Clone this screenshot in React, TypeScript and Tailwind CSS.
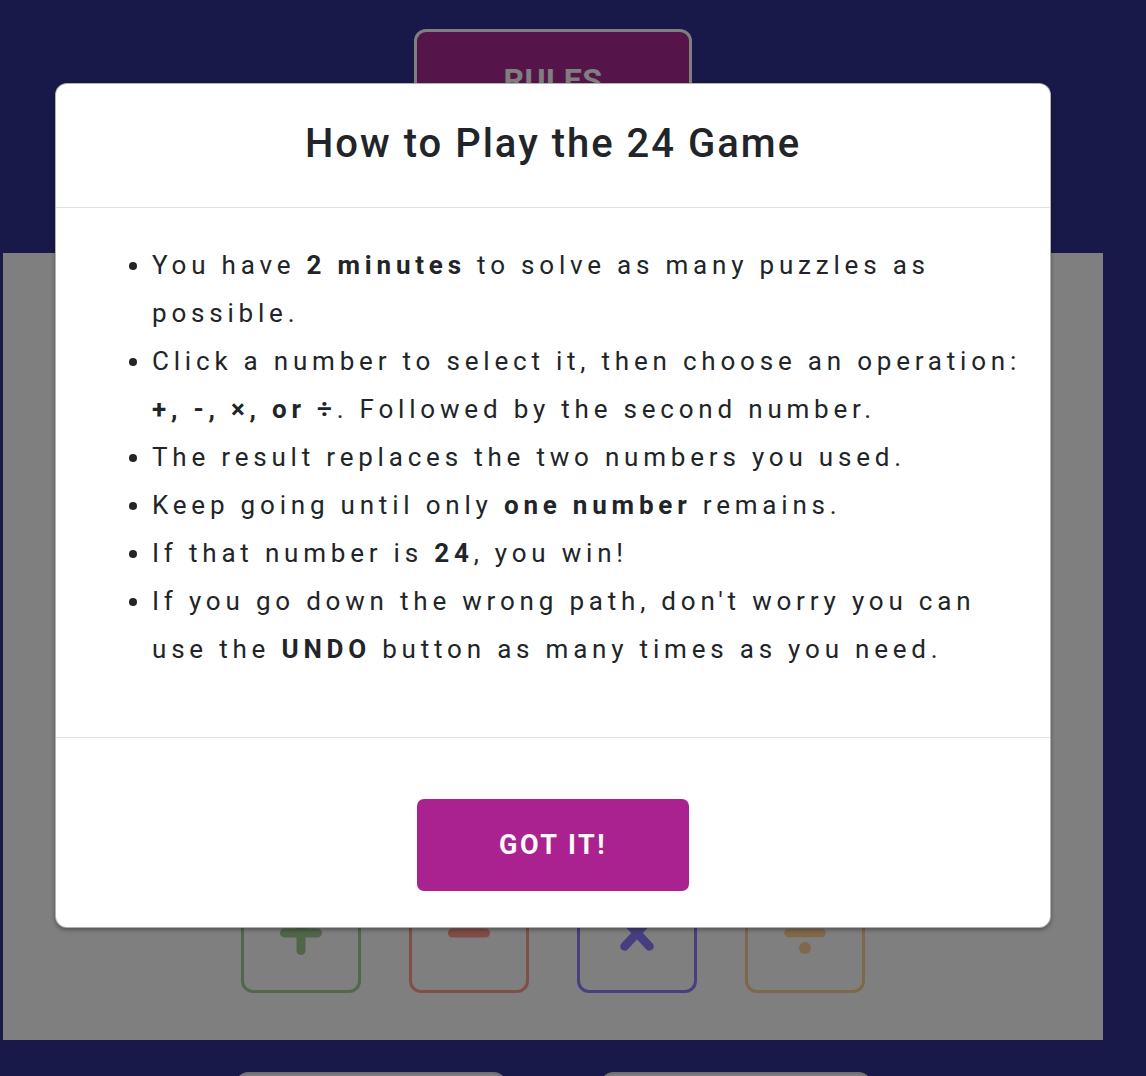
import React from "react";

const font = { fontFamily: "Roboto, 'Noto Sans', sans-serif" };

export default function App() {
  return (
    <div className="relative h-[1076px] w-[1146px] overflow-hidden bg-[#323292]" style={font}>
      {/* Background page */}
      <div className="flex w-[1106px] flex-col">
        <div className="flex justify-center pt-[29px]">
          <button className="flex h-[110px] w-[278px] items-start justify-center rounded-[12px] border-[3px] border-white bg-[#aa2a94] pt-[24px] text-[32px] font-bold leading-[48px] tracking-[0.5px] text-white">
            RULES
          </button>
        </div>
        <div className="ml-[3px] mt-[114px] flex h-[787px] w-[1100px] flex-col items-center justify-end bg-white pb-[47px]">
          <div className="flex gap-[48px]">
            <div className="flex h-[120px] w-[120px] items-center justify-center rounded-[12px] border-[3px] border-[#a2d096]">
              <svg width="44" height="44" viewBox="0 0 44 44"><path d="M22 4.5v35M5.5 22h33" stroke="#a0cc92" strokeWidth="9" strokeLinecap="round" /></svg>
            </div>
            <div className="flex h-[120px] w-[120px] items-center justify-center rounded-[12px] border-[3px] border-[#ffa090]">
              <svg width="44" height="44" viewBox="0 0 44 44"><path d="M5.5 22h33" stroke="#ff9a8a" strokeWidth="9" strokeLinecap="round" /></svg>
            </div>
            <div className="flex h-[120px] w-[120px] items-center justify-center rounded-[12px] border-[3px] border-[#8c80ff]">
              <svg width="44" height="44" viewBox="0 0 44 44"><path d="M9.5 8.5l25 27M34.5 8.5l-25 27" stroke="#8c7eff" strokeWidth="8.5" strokeLinecap="round" /></svg>
            </div>
            <div className="flex h-[120px] w-[120px] items-center justify-center rounded-[12px] border-[3px] border-[#ffd094]">
              <svg width="44" height="44" viewBox="0 0 44 44"><path d="M5.5 22h33" stroke="#ffd294" strokeWidth="8.5" strokeLinecap="round" /><ellipse cx="22" cy="7" rx="6" ry="6" fill="#ffd294" /><ellipse cx="22" cy="37" rx="6" ry="6" fill="#ffd294" /></svg>
            </div>
          </div>
        </div>
        <div className="mt-[32px] flex justify-center gap-[95px]">
          <div className="h-[60px] w-[270px] rounded-[12px] border-2 border-[#e0e0e0] bg-[#fafafa]" />
          <div className="h-[60px] w-[270px] rounded-[12px] border-2 border-[#e0e0e0] bg-[#fafafa]" />
        </div>
      </div>

      {/* Overlay */}
      <div className="absolute inset-0 bg-black/50" />

      {/* Modal */}
      <div className="absolute left-[55px] top-[83px] flex w-[996px] flex-col rounded-[12px] border border-black/30 bg-white shadow-[0_2px_4px_rgba(0,0,0,0.35)]">
        <div className="flex h-[124px] items-center justify-center border-b border-[#dee2e6] pb-[3px]">
          <h2 className="text-[40px] font-medium tracking-[2px] text-[#212529]">How to Play the 24 Game</h2>
        </div>
        <div className="px-[16px] pb-[64px] pt-[33px]">
          <ul className="list-disc pl-[80px] pr-[4px] text-[26px] leading-[48px] tracking-[4.8px] text-[#212529]">
            <li>You have <b>2 minutes</b> to solve as many puzzles as possible.</li>
            <li>Click a number to select it, then choose an operation: <b>+, -, ×, or ÷</b>. Followed by the second number.</li>
            <li>The result replaces the two numbers you used.</li>
            <li>Keep going until only <b>one number</b> remains.</li>
            <li>If that number is <b>24</b>, you win!</li>
            <li>If you go down the wrong path, don't worry you can use the <b>UNDO</b> button as many times as you need.</li>
          </ul>
        </div>
        <div className="flex justify-center border-t border-[#dee2e6] pb-[36px] pt-[61px]">
          <button className="flex h-[92px] w-[272px] items-center justify-center rounded-[7px] bg-[#aa2290] text-[27px] font-bold tracking-[2.5px] text-[#fffaf5]">
            GOT IT!
          </button>
        </div>
      </div>
    </div>
  );
}
